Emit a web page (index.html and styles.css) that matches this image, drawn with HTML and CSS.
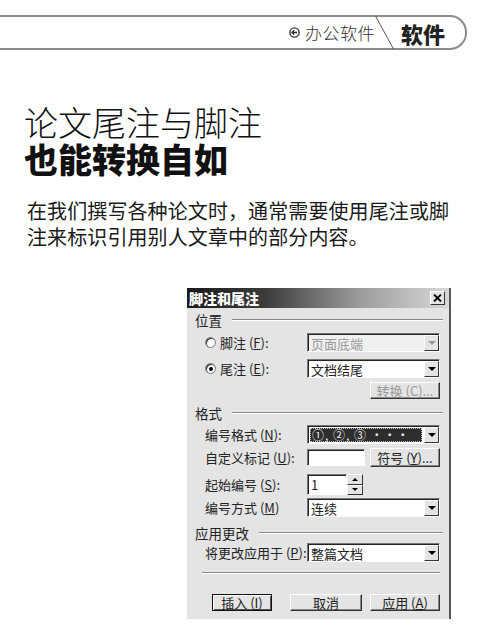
FILE: index.html
```html
<!DOCTYPE html>
<html lang="zh-CN">
<head>
    <meta charset="UTF-8">
    <title>论文尾注与脚注也能转换自如</title>
    <link rel="stylesheet" href="styles.css">
</head>
<body>
    <header class="bar">
        <div class="bar-main">
            <svg class="bar-icon" width="11" height="11" viewBox="0 0 11 11">
                <circle cx="5.5" cy="5.5" r="4.6" fill="none" stroke="#333" stroke-width="1.4"/>
                <path d="M3 5.5h5M5.2 3.2L3 5.5l2.2 2.3" fill="none" stroke="#333" stroke-width="1.4"/>
            </svg>
            <span>办公软件</span>
        </div>
        <svg class="bar-slash" width="19" height="35" viewBox="0 0 19 35">
            <line x1="0" y1="1" x2="19" y2="1" stroke="#8c8c8c" stroke-width="2"/>
            <line x1="0" y1="34" x2="19" y2="34" stroke="#8c8c8c" stroke-width="2"/>
            <line x1="0.5" y1="1" x2="18.5" y2="34" stroke="#555" stroke-width="1"/>
        </svg>
        <div class="bar-tab">软件</div>
    </header>

    <h1 class="title">
        <span class="title-light">论文尾注与脚注</span>
        <span class="title-bold">也能转换自如</span>
    </h1>

    <p class="intro">在我们撰写各种论文时，通常需要使用尾注或脚注来标识引用别人文章中的部分内容。</p>

    <div class="dlg">
        <div class="dlg-title">
            <span>脚注和尾注</span>
            <span class="dlg-close">
                <svg width="9" height="8" viewBox="0 0 9 8">
                    <path d="M1 0.5l7 7M8 0.5l-7 7" stroke="#000" stroke-width="1.8"/>
                </svg>
            </span>
        </div>
        <div class="dlg-body">
            <div class="group">位置</div>
            <div class="row row-first">
                <label class="lbl"><span class="radio"></span>脚注 (<u>F</u>):</label>
                <div class="select disabled"><span class="select-val">页面底端</span><span class="select-btn"></span></div>
            </div>
            <div class="row row-second">
                <label class="lbl"><span class="radio on"></span>尾注 (<u>E</u>):</label>
                <div class="select"><span class="select-val">文档结尾</span><span class="select-btn"></span></div>
            </div>
            <div class="row-right">
                <span class="btn disabled btn-conv">转换 (<u>C</u>)...</span>
            </div>

            <div class="group group-fmt">格式</div>
            <div class="row row-fmt">
                <label class="lbl">编号格式 (<u>N</u>):</label>
                <div class="select"><span class="select-val picked">①, ②, ③ ···</span><span class="select-btn"></span></div>
            </div>
            <div class="row row-mark">
                <label class="lbl">自定义标记 (<u>U</u>):</label>
                <div class="pair">
                    <span class="field field-mark"></span>
                    <span class="btn btn-sym">符号 (<u>Y</u>)...</span>
                </div>
            </div>
            <div class="row row-start">
                <label class="lbl">起始编号 (<u>S</u>):</label>
                <div class="pair">
                    <span class="field field-num">1</span>
                    <span class="spin"><span class="spin-up"></span><span class="spin-down"></span></span>
                </div>
            </div>
            <div class="row row-mode">
                <label class="lbl">编号方式 (<u>M</u>)</label>
                <div class="select"><span class="select-val">连续</span><span class="select-btn"></span></div>
            </div>

            <div class="group group-apply">应用更改</div>
            <div class="row row-apply">
                <label class="lbl">将更改应用于 (<u>P</u>):</label>
                <div class="select"><span class="select-val">整篇文档</span><span class="select-btn"></span></div>
            </div>

            <div class="sep"></div>

            <div class="actions">
                <span class="btn btn-default">插入 (<u>I</u>)</span>
                <span class="btn btn-cancel">取消</span>
                <span class="btn btn-apply">应用 (<u>A</u>)</span>
            </div>
        </div>
    </div>
</body>
</html>
```

FILE: styles.css
```css
body {
    margin: 0;
    background: #fff;
    color: #111;
    font-family: "Noto Sans CJK SC", "Noto Sans", sans-serif;
}

/* top bar */
.bar {
    display: flex;
    height: 35px;
    margin: 15px 13px 0 0;
}

.bar-main {
    flex: 1;
    display: flex;
    align-items: center;
    justify-content: flex-end;
    gap: 5px;
    border-top: 2px solid #8c8c8c;
    border-bottom: 2px solid #8c8c8c;
    font-size: 17px;
    font-weight: 300;
    color: #333;
    letter-spacing: 0.5px;
}

.bar-icon {
    display: block;
}

.bar-slash {
    display: block;
    flex: none;
}

.bar-tab {
    display: flex;
    align-items: center;
    border: 2px solid #8c8c8c;
    border-left: none;
    border-radius: 0 17px 17px 0;
    padding: 0 20px 0 7px;
    font-size: 22px;
    font-weight: 900;
    color: #222;
}

/* headline */
.title {
    margin: 53px 0 0 24px;
    font-size: 34px;
    line-height: 37px;
    font-weight: normal;
}

.title span {
    display: block;
}

.title-light {
    font-weight: 300;
}

.title-bold {
    font-weight: 900;
}

.intro {
    width: 428px;
    margin: 21px 0 0 27px;
    font-size: 20px;
    line-height: 26px;
    letter-spacing: 0.1px;
    color: #1a1a1a;
}

/* dialog */
.dlg {
    width: 262px;
    margin: 38px 0 0 187px;
    background: #e4e4e4;
    border-right: 2px solid #555;
    font-size: 13px;
    color: #222;
}

.dlg-title {
    height: 20px;
    display: flex;
    align-items: center;
    justify-content: space-between;
    padding: 0 4px 0 2px;
    background: linear-gradient(to right, #1a1a1a, #3c3c3c 30%, #9a9a9a 65%, #d8d8d8);
    color: #fff;
    font-size: 14px;
    font-weight: 900;
}

.dlg-close {
    width: 15px;
    height: 14px;
    box-sizing: border-box;
    display: flex;
    align-items: center;
    justify-content: center;
    background: #e4e4e4;
    border: 1px solid;
    border-color: #fff #333 #333 #fff;
}

.dlg-close svg {
    display: block;
}

.dlg-body {
    padding: 0 6px 8px 8px;
}

.group {
    display: flex;
    align-items: center;
    gap: 10px;
    height: 16px;
    margin-top: 4px;
    font-size: 13.5px;
}

.group::after {
    content: "";
    flex: 1;
    height: 0;
    border-top: 1px solid #888;
    border-bottom: 1px solid #fff;
}

.group-fmt {
    margin-top: 6px;
}

.group-apply {
    margin-top: 9px;
}

.row {
    display: grid;
    grid-template-columns: 112px 133px;
    align-items: center;
}

.row-first { height: 19px; margin-top: 5px; }
.row-second { height: 19px; margin-top: 7px; }
.row-fmt { height: 18px; margin-top: 4px; }
.row-mark { height: 19px; margin-top: 5px; }
.row-start { height: 16px; margin-top: 7px; }
.row-mode { height: 18px; margin-top: 8px; }
.row-apply { height: 18px; margin-top: 2px; }

.lbl {
    display: flex;
    align-items: center;
    padding-left: 10px;
    white-space: nowrap;
}

.radio {
    width: 9px;
    height: 9px;
    margin-right: 4px;
    border-radius: 50%;
    background: #fff;
    border: 1px solid #777;
    box-shadow: inset 1px 1px 0 #333;
    display: flex;
    align-items: center;
    justify-content: center;
}

.radio.on::after {
    content: "";
    width: 4px;
    height: 4px;
    border-radius: 50%;
    background: #000;
}

.select {
    display: flex;
    height: 100%;
    box-sizing: border-box;
    border: 1px solid;
    border-color: #777 #fff #fff #777;
    box-shadow: inset 1px 1px 0 #222;
    background: #fff;
    padding: 1px 0 0 1px;
}

.select-val {
    flex: 1;
    display: flex;
    align-items: center;
    padding-left: 2px;
    line-height: 1;
}

.select-val.picked {
    margin: 1px 2px 1px 1px;
    background: #2e2e2e;
    color: #eee;
    outline: 1px dotted #bbb;
    outline-offset: -1px;
    font-size: 12px;
    letter-spacing: 1px;
}

.select-btn {
    width: 15px;
    box-sizing: border-box;
    background: #e4e4e4;
    border: 1px solid;
    border-color: #fff #333 #333 #fff;
    display: flex;
    align-items: center;
    justify-content: center;
}

.select-btn::after {
    content: "";
    border-left: 4px solid transparent;
    border-right: 4px solid transparent;
    border-top: 4px solid #000;
}

.select.disabled {
    background: #f0f0f0;
    color: #999;
}

.select.disabled .select-btn::after {
    border-top-color: #999;
}

.pair {
    display: flex;
    height: 100%;
    align-items: stretch;
}

.field {
    box-sizing: border-box;
    background: #fff;
    border: 1px solid;
    border-color: #777 #fff #fff #777;
    box-shadow: inset 1px 1px 0 #222;
    display: flex;
    align-items: center;
    padding-left: 3px;
}

.field-mark {
    width: 58px;
    height: 17px;
    align-self: center;
}

.field-num {
    width: 40px;
}

.spin {
    width: 16px;
    display: flex;
    flex-direction: column;
}

.spin span {
    flex: 1;
    background: #e4e4e4;
    border: 1px solid;
    border-color: #fff #333 #333 #fff;
    display: flex;
    align-items: center;
    justify-content: center;
}

.spin-up::after {
    content: "";
    border-left: 3px solid transparent;
    border-right: 3px solid transparent;
    border-bottom: 3px solid #000;
}

.spin-down::after {
    content: "";
    border-left: 3px solid transparent;
    border-right: 3px solid transparent;
    border-top: 3px solid #000;
}

.btn {
    box-sizing: border-box;
    height: 17px;
    display: flex;
    align-items: center;
    justify-content: center;
    background: #e4e4e4;
    border: 1px solid;
    border-color: #fff #333 #333 #fff;
    box-shadow: inset -1px -1px 0 #888;
    white-space: nowrap;
}

.btn.disabled {
    color: #999;
}

.btn-sym {
    width: 70px;
    height: 19px;
    margin-left: 5px;
}

.row-right {
    display: flex;
    justify-content: flex-end;
    padding-right: 3px;
    margin-top: 4px;
}

.btn-conv {
    width: 70px;
}

.sep {
    height: 0;
    margin: 11px 3px 0 7px;
    border-top: 1px solid #888;
    border-bottom: 1px solid #fff;
}

.actions {
    display: flex;
    margin-top: 20px;
    padding-left: 17px;
}

.btn-default {
    width: 60px;
    border: 1px solid #111;
    box-shadow: inset 1px 1px 0 #fff, inset -1px -1px 0 #555;
}

.btn-cancel {
    width: 72px;
    margin-left: 18px;
}

.btn-apply {
    width: 70px;
    margin-left: 8px;
}
```
